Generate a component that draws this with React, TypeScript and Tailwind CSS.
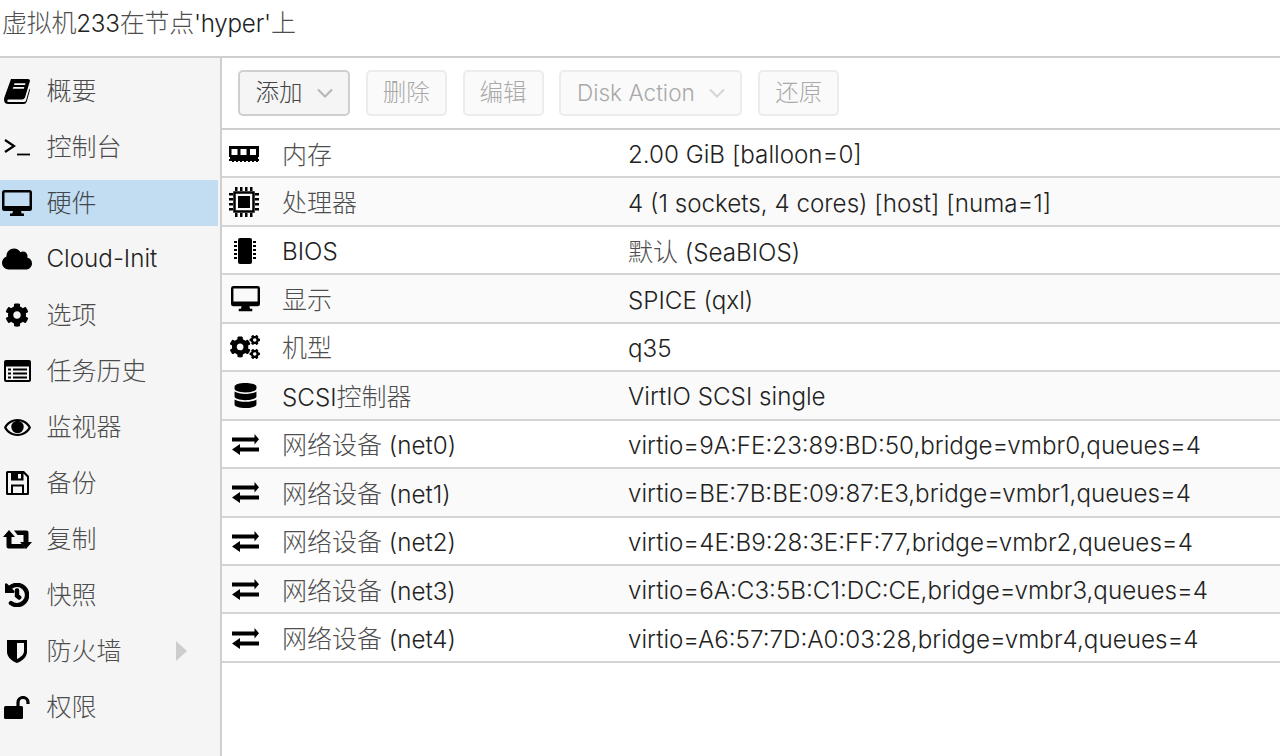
import React from "react";
import { FaCloud, FaCog, FaHistory, FaCogs, FaDatabase } from "react-icons/fa";

const font = { fontFamily: 'Inter, "Noto Sans CJK SC", sans-serif' };

function T({ s }: { s: string }) {
  return (
    <>
      {s.split(/([\u4e00-\u9fff]+)/).map((p, i) =>
        i % 2 ? (
          <span key={i} className="text-[25px] opacity-80">{p}</span>
        ) : (
          <span key={i}>{p}</span>
        )
      )}
    </>
  );
}

const Book = () => (
  <svg width="26" height="25" viewBox="0 0 26 25">
    <path fillRule="evenodd" d="M7 0H24Q26.500 0 25.800 2.500L21 18.500Q20.300 20.500 18 20.500H5Q3.200 20.500 3.200 21.800Q3.200 23 5 23H20Q21.500 23 22 21.500L25.500 9.500L26 11L22.800 22.500Q22 25 19.500 25H4.500Q0 25 0 20.500Q0 19.500 .5 18zM10.500 4.200L10 6H21L21.500 4.200zM9.300 8L8.800 9.800H19.800L20.300 8z" />
  </svg>
);
const Desktop = ({ w = 30 }: { w?: number }) => (
  <svg width={w} height={w * 0.87} viewBox="0 0 30 26">
    <path fillRule="evenodd" d="M2.500 0H27.500Q30 0 30 2.500V18.500Q30 21 27.500 21H19L19.700 23.500H22V26H8V23.500H10.300L11 21H2.500Q0 21 0 18.500V2.500Q0 0 2.500 0ZM2.500 2.500V16H27.500V2.500Z" />
  </svg>
);
const ListAlt = () => (
  <svg width="27" height="22" viewBox="0 0 27 22">
    <path fillRule="evenodd" d="M2 0H25Q27 0 27 2V20Q27 22 25 22H2Q0 22 0 20V2Q0 0 2 0ZM2 6.500V20H25V6.500ZM4 8.500H7V10.500H4ZM9 8.500H23V10.500H9ZM4 12.500H7V14.500H4ZM9 12.500H23V14.500H9ZM4 16.500H7V18.500H4ZM9 16.500H23V18.500H9Z" />
  </svg>
);
const Eye = () => (
  <svg width="27" height="17" viewBox="0 0 27 17">
    <path fillRule="evenodd" d="M13.500 0C20 0 25 4 27 8.500C25 13 20 17 13.500 17C7 17 2 13 0 8.500C2 4 7 0 13.500 0ZM13.500 2C8.500 2 4.500 5 2.500 8.500C4.500 12 8.500 15 13.500 15C18.500 15 22.500 12 24.500 8.500C22.500 5 18.500 2 13.500 2Z" />
    <circle cx="13.500" cy="8" r="6.200" />
  </svg>
);
const Floppy = () => (
  <svg width="23" height="24" viewBox="0 0 23 24">
    <path fillRule="evenodd" d="M1.500 0H18L23 5V22.500Q23 24 21.500 24H1.500Q0 24 0 22.500V1.500Q0 0 1.500 0ZM2 2V22H5V13.500H18V22H21V6L17.500 2.500V9.500H5V2ZM7 15.500V22H16V15.500ZM12 3V7.500H15V3Z" />
  </svg>
);
const Retweet = () => (
  <svg width="29" height="19" viewBox="0 0 29 19">
    <path d="M6 0L12 7H8.500V14H19L22.500 18.500H5.500Q3.500 18.500 3.500 16.500V7H0Z" />
    <path d="M23 19L17 12H20.500V5H14.500L11 .5H23.500Q25.500 .5 25.500 2.500V12H29Z" />
  </svg>
);
const Unlock = () => (
  <svg width="26" height="23" viewBox="0 0 26 23">
    <rect x="0" y="10" width="19" height="13" rx="1.500" />
    <path d="M14 11V6.500a5 5 0 0 1 10 0V8" fill="none" stroke="#000" strokeWidth="3.200" />
  </svg>
);
const Terminal = () => (
  <svg width="26" height="20" viewBox="0 0 26 20" fill="none" stroke="#000" strokeWidth="2.2">
    <path d="M1 3l9 6-9 6" />
    <path d="M13 17.500h13" strokeWidth="1.800" />
  </svg>
);
const Shield = () => (
  <svg width="20" height="24" viewBox="0 0 20 24">
    <path fillRule="evenodd" d="M0 1h20v12c0 5-5 9-10 11C5 22 0 18 0 13zM10 4v16c3-1.500 7-4 7-8V4z" />
  </svg>
);
const Cpu = () => (
  <svg width="32" height="32" viewBox="0 0 32 32" className="mr-[2px]">
    <path d="M7 1h2.500v4H7zM12 1h2.500v4H12zM17 1h2.500v4H17zM22 1h2.500v4H22zM7 27h2.500v4H7zM12 27h2.500v4H12zM17 27h2.500v4H17zM22 27h2.500v4H22zM1 7h4v2.500H1zM1 12h4v2.500H1zM1 17h4v2.500H1zM1 22h4v2.500H1zM27 7h4v2.500h-4zM27 12h4v2.500h-4zM27 17h4v2.500h-4zM27 22h4v2.500h-4z" />
    <rect x="6.500" y="6.500" width="19" height="19" fill="none" stroke="#000" strokeWidth="2.500" />
    <rect x="10" y="10" width="12" height="12" />
  </svg>
);
const Bios = () => (
  <svg width="24" height="28" viewBox="0 0 24 28">
    <rect x="5" y="1" width="14" height="26" rx="2" />
    <path d="M1 4h3v2H1zM1 8h3v2H1zM1 12h3v2H1zM1 16h3v2H1zM1 20h3v2H1zM20 4h3v2h-3zM20 8h3v2h-3zM20 12h3v2h-3zM20 16h3v2h-3zM20 20h3v2h-3z" />
  </svg>
);
const Mem = () => (
  <svg width="32" height="18" viewBox="0 0 32 18" className="mr-[3px]">
    <path fillRule="evenodd" d="M1 1h30v11h-1v2h1v2H1v-2h1v-2H1zM3.500 4v6h6V4zM12.500 4v6h6V4zM22 4v6h6V4z" />
    <path d="M4 14h2v3H4zM8 14h2v3H8zM12 14h2v3h-2zM16 14h2v3h-2zM20 14h2v3h-2zM24 14h2v3h-2zM28 14h2v3h-2z" />
  </svg>
);
const Exchange = () => (
  <svg width="27" height="21" viewBox="0 0 27 21">
    <path d="M0 3.500H22.500V0L27 5.200L22.500 10.500V7.500H0Z" />
    <path d="M27 13.500H8V10L0 15.500L8 21V17.500H27Z" transform="translate(0 0)" />
  </svg>
);
const Chevron = ({ c }: { c: string }) => (
  <svg width="16" height="10" viewBox="0 0 16 10" fill="none" strokeWidth="2" className={c} stroke="currentColor">
    <path d="M1 1.500l7 7 7-7" />
  </svg>
);

const nav: [React.ReactNode, string, boolean?, boolean?][] = [
  [<Book />, "概要"],
  [<Terminal />, "控制台"],
  [<Desktop />, "硬件", true],
  [<FaCloud size={30} />, "Cloud-Init"],
  [<FaCog size={24} />, "选项"],
  [<ListAlt />, "任务历史"],
  [<Eye />, "监视器"],
  [<Floppy />, "备份"],
  [<Retweet />, "复制"],
  [<FaHistory size={24} stroke="currentColor" strokeWidth={30} />, "快照"],
  [<Shield />, "防火墙", false, true],
  [<Unlock />, "权限"],
];

const rows: [React.ReactNode, string, string][] = [
  [<Mem />, "内存", "2.00 GiB [balloon=0]"],
  [<Cpu />, "处理器", "4 (1 sockets, 4 cores) [host] [numa=1]"],
  [<Bios />, "BIOS", "默认 (SeaBIOS)"],
  [<Desktop w={29} />, "显示", "SPICE (qxl)"],
  [<FaCogs size={30} />, "机型", "q35"],
  [<FaDatabase size={25} />, "SCSI控制器", "VirtIO SCSI single"],
  [<Exchange />, "网络设备 (net0)", "virtio=9A:FE:23:89:BD:50,bridge=vmbr0,queues=4"],
  [<Exchange />, "网络设备 (net1)", "virtio=BE:7B:BE:09:87:E3,bridge=vmbr1,queues=4"],
  [<Exchange />, "网络设备 (net2)", "virtio=4E:B9:28:3E:FF:77,bridge=vmbr2,queues=4"],
  [<Exchange />, "网络设备 (net3)", "virtio=6A:C3:5B:C1:DC:CE,bridge=vmbr3,queues=4"],
  [<Exchange />, "网络设备 (net4)", "virtio=A6:57:7D:A0:03:28,bridge=vmbr4,queues=4"],
];

function Btn({ w, label, menu, active, size }: { w: string; label: string; menu?: boolean; active?: boolean; size: string }) {
  return (
    <div className={`${w} ${size} h-[46px] shrink-0 rounded-[5px] border-2 flex items-center justify-center gap-[14px] ${active ? "border-[#cfcfcf] bg-[#f5f5f5] text-[#444]" : "border-[#ececec] bg-[#fafafa] text-[#a9a9a9]"}`}>
      <span>{label}</span>
      {menu && <Chevron c={active ? "text-[#b5b5b5]" : "text-[#d5d5d5]"} />}
    </div>
  );
}

export default function App() {
  return (
    <div className="w-[1280px] h-[756px] overflow-hidden bg-white text-[24.2px] font-light flex flex-col text-[#222]" style={font}>
      <div className="h-[58px] shrink-0 border-b-2 border-[#cfcfcf] pl-[2px] pt-[5px] leading-[36px] tracking-[-0.25px]"><T s="虚拟机233在节点'hyper'上" /></div>
      <div className="flex flex-1 min-h-0">
        <div className="w-[222px] shrink-0 bg-[#f5f5f5] border-r-2 border-[#cfcfcf] pt-[10px] flex flex-col gap-[10px]">
          {nav.map(([ic, t, sel, arrow]) => (
            <div key={t} className={`h-[46px] w-[218px] shrink-0 flex items-center ${sel ? "bg-[#c2ddf2]" : ""}`}>
              <div className="w-[34px] flex justify-center items-center text-black">{ic}</div>
              <span className="ml-[12.5px] flex-1 leading-[36px]"><T s={t} /></span>
              {arrow && <span className="w-0 h-0 border-y-[10px] border-y-transparent border-l-[11px] border-l-[#cdcdcd] mr-[31px]" />}
            </div>
          ))}
        </div>
        <div className="flex-1 min-w-0 flex flex-col">
          <div className="h-[72px] shrink-0 border-b-2 border-[#cfcfcf] pl-[16px] pt-[12px] flex items-start gap-[15.8px]">
            <Btn w="w-[112px]" size="text-[23.5px]" label="添加" menu active />
            <Btn w="w-[81px]" size="text-[23.5px]" label="删除" />
            <Btn w="w-[81px]" size="text-[23.5px]" label="编辑" />
            <Btn w="w-[183px]" size="text-[22.6px]" label="Disk Action" menu />
            <Btn w="w-[81px]" size="text-[23.5px]" label="还原" />
          </div>
          {rows.map(([ic, a, b], i) => (
            <div key={a} className={`h-[48.45px] shrink-0 flex items-center pt-[1px] border-b-2 border-[#d4d4d4] ${i % 2 ? "bg-[#fafafa]" : "bg-white"}`}>
              <div className="w-[46px] flex justify-center items-center text-black">{ic}</div>
              <div className="ml-[14px] w-[346px] pt-[3px] leading-[36px]"><T s={a} /></div>
              <div className="whitespace-nowrap pt-[3px] leading-[36px]"><T s={b} /></div>
            </div>
          ))}
        </div>
      </div>
    </div>
  );
}
